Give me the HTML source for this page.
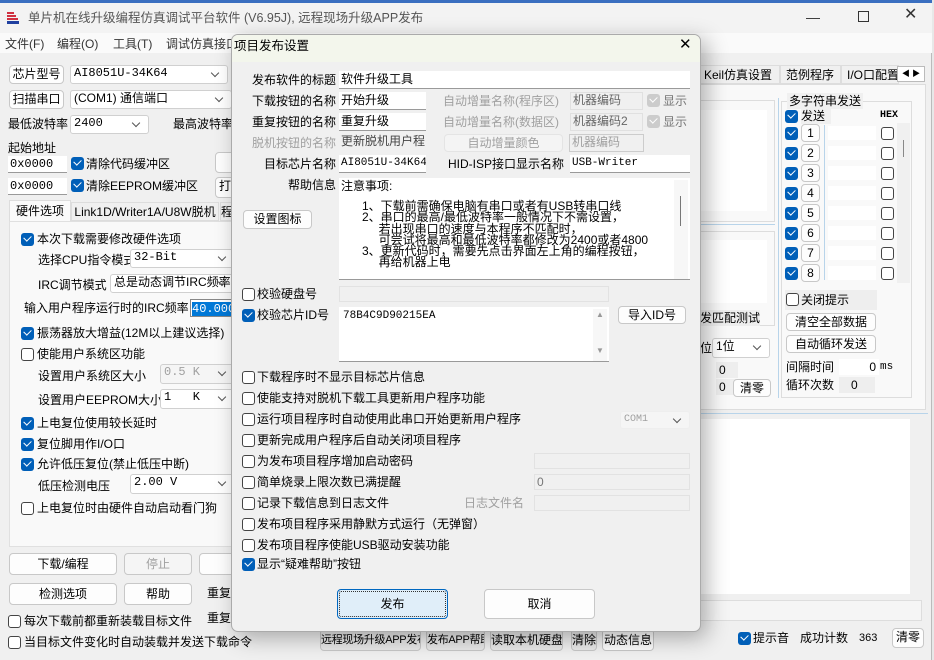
<!DOCTYPE html>
<html><head><meta charset="utf-8">
<style>
*{box-sizing:border-box;margin:0;padding:0}
body{width:934px;height:660px;overflow:hidden;background:#e8e8e8;font-family:"Liberation Sans","Noto Sans CJK SC",sans-serif;font-size:12px;color:#000;position:relative}
.a{position:absolute;white-space:nowrap;line-height:16px}
.g{color:#a0a0a0}
.cb{position:absolute;width:13px;height:13px;border:1px solid #444;border-radius:3px;background:#fff}
.ck{position:absolute;width:13px;height:13px;border-radius:3px;background:#005fb8}
.ck:after{content:"";position:absolute;left:3px;top:2px;width:6px;height:4px;border-left:1.5px solid #fff;border-bottom:1.5px solid #fff;transform:rotate(-45deg)}
.ckd{position:absolute;width:13px;height:13px;border-radius:3px;background:#ccc}
.ckd:after{content:"";position:absolute;left:3px;top:2px;width:6px;height:4px;border-left:1.5px solid #fff;border-bottom:1.5px solid #fff;transform:rotate(-45deg)}
.btn{position:absolute;background:#fdfdfd;border:1px solid #c8c8c8;border-radius:4px;text-align:center;line-height:16px;white-space:nowrap;overflow:hidden}
.in{position:absolute;background:#fff;border-bottom:1px solid #9a9a9a;line-height:16px;padding-left:2px;white-space:nowrap;overflow:hidden}
.in2{position:absolute;background:#f0f0f0;border:1px solid #e0e0e0;line-height:15px;padding-left:2px;white-space:nowrap;overflow:hidden}
.sel{position:absolute;background:#fff;border:1px solid #d0d0d0;border-radius:3px;line-height:15px;padding-left:3px;white-space:nowrap;overflow:hidden}
.sel:after{content:"";position:absolute;right:9px;top:4px;width:5px;height:5px;border-right:1px solid #555;border-bottom:1px solid #555;transform:rotate(45deg)}
.m{font-family:"Liberation Mono","Noto Sans CJK SC",monospace}
.bb{font-size:11px;letter-spacing:-0.3px}
</style></head><body>
<div class="a" style="left:0;top:0;width:932px;height:660px;background:#f0f0f0;border-right:1px solid #bbb"></div>
<div class="a" style="left:0;top:0;width:932px;height:3px;background:#3a6fc0"></div>
<div class="a" style="left:0;top:3px;width:932px;height:30px;background:#f3f3f3"></div>
<svg class="a" style="left:6px;top:11px" width="14" height="13"><path d="M1 2h7M1 5h9M1 8h11" stroke="#d03040" stroke-width="2"/><rect x="1" y="10" width="12" height="3" fill="#2040a0"/></svg>
<div class="a" style="left:28px;top:10px;color:#555;font-size:12.5px">单片机在线升级编程仿真调试平台软件 (V6.95J), 远程现场升级APP发布</div>
<div class="a" style="left:806px;top:9px;color:#333;font-size:14px">—</div>
<div class="a" style="left:858px;top:11px;width:11px;height:11px;border:1px solid #333"></div>
<div class="a" style="left:904px;top:7px;color:#333;font-size:16px">✕</div>
<div class="a" style="left:0;top:33px;width:932px;height:20px;background:#fafafa"></div>
<div class="a" style="left:5px;top:36px;color:#333">文件(F)</div>
<div class="a" style="left:57px;top:36px;color:#333">编程(O)</div>
<div class="a" style="left:113px;top:36px;color:#333">工具(T)</div>
<div class="a" style="left:166px;top:36px;color:#333">调试仿真接口</div>

<div class="btn" style="left:9px;top:65px;width:55px;height:19px">芯片型号</div>
<div class="sel m" style="left:70px;top:65px;width:158px;height:19px">AI8051U-34K64</div>
<div class="btn" style="left:9px;top:90px;width:55px;height:19px">扫描串口</div>
<div class="sel" style="left:70px;top:90px;width:162px;height:19px">(COM1) 通信端口</div>
<div class="a" style="left:8px;top:116px">最低波特率</div>
<div class="sel m" style="left:70px;top:115px;width:79px;height:19px">2400</div>
<div class="a" style="left:173px;top:116px">最高波特率</div>
<div class="a" style="left:8px;top:140px">起始地址</div>
<div class="in m" style="left:8px;top:156px;width:59px;height:17px">0x0000</div>
<div class="ck" style="left:71px;top:157px"></div><div class="a" style="left:86px;top:156px">清除代码缓冲区</div>
<div class="btn" style="left:215px;top:152px;width:20px;height:21px"></div>
<div class="in m" style="left:8px;top:178px;width:59px;height:17px">0x0000</div>
<div class="ck" style="left:71px;top:179px"></div><div class="a" style="left:86px;top:178px">清除EEPROM缓冲区</div>
<div class="btn" style="left:215px;top:177px;width:20px;height:21px">打</div>
<div class="a" style="left:9px;top:200px;width:62px;height:21px;background:#fafafa;border:1px solid #ddd;border-bottom:none;text-align:center;line-height:20px">硬件选项</div>
<div class="a" style="left:71px;top:202px;width:148px;height:19px;border:1px solid #ddd;text-align:center;line-height:18px">Link1D/Writer1A/U8W脱机</div>
<div class="a" style="left:220px;top:202px;width:14px;height:19px;border:1px solid #ddd;line-height:18px">程</div>
<div class="a" style="left:9px;top:221px;width:226px;height:326px;background:#f9f9f9;border:1px solid #e0e0e0"></div>
<div class="ck" style="left:21px;top:233px"></div><div class="a" style="left:37px;top:231px">本次下载需要修改硬件选项</div>
<div class="a" style="left:38px;top:252px">选择CPU指令模式</div><div class="sel m" style="left:130px;top:249px;width:105px;height:19px">32-Bit</div>
<div class="a" style="left:38px;top:277px">IRC调节模式</div><div class="sel" style="left:110px;top:274px;width:125px;height:19px">总是动态调节IRC频率</div>
<div class="a" style="left:24px;top:300px">输入用户程序运行时的IRC频率</div>
<div class="a m" style="left:190px;top:299px;width:45px;height:18px;background:#fff;border:1px solid #888;padding:1px"><span style="background:#0078d7;color:#fff">40.000</span></div>
<div class="ck" style="left:21px;top:327px"></div><div class="a" style="left:37px;top:325px">振荡器放大增益(12M以上建议选择)</div>
<div class="cb" style="left:21px;top:348px"></div><div class="a" style="left:37px;top:346px">使能用户系统区功能</div>
<div class="a" style="left:38px;top:368px">设置用户系统区大小</div><div class="sel m g" style="left:160px;top:364px;width:75px;height:20px;background:#f5f5f5">0.5 K</div>
<div class="a" style="left:38px;top:392px">设置用户EEPROM大小</div><div class="sel m" style="left:160px;top:389px;width:75px;height:20px">1&nbsp;&nbsp;&nbsp;K</div>
<div class="ck" style="left:21px;top:417px"></div><div class="a" style="left:37px;top:415px">上电复位使用较长延时</div>
<div class="ck" style="left:21px;top:438px"></div><div class="a" style="left:37px;top:436px">复位脚用作I/O口</div>
<div class="ck" style="left:21px;top:458px"></div><div class="a" style="left:37px;top:456px">允许低压复位(禁止低压中断)</div>
<div class="a" style="left:38px;top:478px">低压检测电压</div><div class="sel m" style="left:130px;top:474px;width:105px;height:20px">2.00 V</div>
<div class="cb" style="left:21px;top:502px"></div><div class="a" style="left:37px;top:500px">上电复位时由硬件自动启动看门狗</div>
<div class="btn" style="left:9px;top:553px;width:108px;height:22px;line-height:20px">下载/编程</div>
<div class="btn g" style="left:124px;top:553px;width:68px;height:22px;line-height:20px;background:#f5f5f5">停止</div>
<div class="btn" style="left:199px;top:553px;width:36px;height:22px"></div>
<div class="btn" style="left:9px;top:583px;width:108px;height:22px;line-height:20px">检测选项</div>
<div class="btn" style="left:124px;top:583px;width:68px;height:22px;line-height:20px">帮助</div>
<div class="a" style="left:207px;top:585px">重复</div>
<div class="a" style="left:207px;top:610px">重复</div>
<div class="cb" style="left:8px;top:615px"></div><div class="a" style="left:24px;top:613px">每次下载前都重新装载目标文件</div>
<div class="cb" style="left:8px;top:636px"></div><div class="a" style="left:24px;top:634px">当目标文件变化时自动装载并发送下载命令</div>

<div class="a" style="left:700px;top:65px;width:80px;height:19px;border:1px solid #ddd;line-height:18px;padding-left:3px">Keil仿真设置</div>
<div class="a" style="left:780px;top:65px;width:61px;height:19px;border:1px solid #ddd;line-height:18px;padding-left:5px">范例程序</div>
<div class="a" style="left:841px;top:65px;width:58px;height:19px;border:1px solid #ddd;line-height:18px;padding-left:5px;overflow:hidden">I/O口配置</div>
<div class="a" style="left:897px;top:66px;width:28px;height:16px;background:#fff;border:1px solid #bbb;font-size:8px;line-height:14px;text-align:center">◀ ▶</div>
<div class="a" style="left:700px;top:84px;width:226px;height:326px;background:#f9f9f9;border:1px solid #ddd"></div>
<div class="a" style="left:700px;top:100px;width:75px;height:122px;border:1px solid #ddd"></div>
<div class="a" style="left:700px;top:110px;width:67px;height:101px;background:#fff"></div>
<div class="a" style="left:700px;top:224px;width:75px;height:1px;background:#b8d4ea"></div>
<div class="a" style="left:700px;top:231px;width:75px;height:95px;border:1px solid #ddd"></div>
<div class="a" style="left:700px;top:240px;width:67px;height:63px;background:#fff"></div>
<div class="a" style="left:700px;top:310px;background:#eee">发匹配测试</div>
<div class="a" style="left:700px;top:340px">位</div>
<div class="sel" style="left:712px;top:338px;width:58px;height:20px">1位</div>
<div class="a" style="left:716px;top:362px;width:22px;background:#eee;padding-left:3px">0</div>
<div class="a" style="left:716px;top:379px;width:22px;background:#eee;padding-left:3px">0</div>
<div class="btn" style="left:733px;top:379px;width:38px;height:18px">清零</div>
<div class="a" style="left:778px;top:98px;width:1px;height:300px;background:#b8d4ea"></div>
<div class="a" style="left:781px;top:101px;width:131px;height:297px;border:1px solid #ddd"></div>
<div class="a" style="left:787px;top:93px;background:#f0f0f0;padding:0 2px">多字符串发送</div>
<div class="ck" style="left:785px;top:110px"></div><div class="a" style="left:801px;top:108px;background:#f0f0f0;width:30px">发送</div>
<div class="a m" style="left:880px;top:108px;font-size:10px;font-weight:bold">HEX</div>
<div class="a" style="left:897px;top:123px;width:13px;height:160px;background:#f0f0f0"></div>
<div class="a" style="left:903px;top:140px;width:1px;height:17px;background:#888"></div>
<div class="a" style="left:824px;top:125px;width:1px;height:155px;background:#b8d4ea"></div>

<div class="ck" style="left:785px;top:127px"></div><div class="btn" style="left:801px;top:124px;width:19px;height:18px">1</div><div class="a" style="left:828px;top:126px;width:48px;height:14px;background:#fff"></div><div class="cb" style="left:881px;top:127px"></div>
<div class="ck" style="left:785px;top:147px"></div><div class="btn" style="left:801px;top:144px;width:19px;height:18px">2</div><div class="a" style="left:828px;top:146px;width:48px;height:14px;background:#fff"></div><div class="cb" style="left:881px;top:147px"></div>
<div class="ck" style="left:785px;top:167px"></div><div class="btn" style="left:801px;top:164px;width:19px;height:18px">3</div><div class="a" style="left:828px;top:166px;width:48px;height:14px;background:#fff"></div><div class="cb" style="left:881px;top:167px"></div>
<div class="ck" style="left:785px;top:187px"></div><div class="btn" style="left:801px;top:184px;width:19px;height:18px">4</div><div class="a" style="left:828px;top:186px;width:48px;height:14px;background:#fff"></div><div class="cb" style="left:881px;top:187px"></div>
<div class="ck" style="left:785px;top:207px"></div><div class="btn" style="left:801px;top:204px;width:19px;height:18px">5</div><div class="a" style="left:828px;top:206px;width:48px;height:14px;background:#fff"></div><div class="cb" style="left:881px;top:207px"></div>
<div class="ck" style="left:785px;top:227px"></div><div class="btn" style="left:801px;top:224px;width:19px;height:18px">6</div><div class="a" style="left:828px;top:226px;width:48px;height:14px;background:#fff"></div><div class="cb" style="left:881px;top:227px"></div>
<div class="ck" style="left:785px;top:247px"></div><div class="btn" style="left:801px;top:244px;width:19px;height:18px">7</div><div class="a" style="left:828px;top:246px;width:48px;height:14px;background:#fff"></div><div class="cb" style="left:881px;top:247px"></div>
<div class="ck" style="left:785px;top:267px"></div><div class="btn" style="left:801px;top:264px;width:19px;height:18px">8</div><div class="a" style="left:828px;top:266px;width:48px;height:14px;background:#fff"></div><div class="cb" style="left:881px;top:267px"></div>
<div class="a" style="left:785px;top:290px;width:92px;height:20px;background:#eee"></div>
<div class="cb" style="left:786px;top:293px"></div><div class="a" style="left:801px;top:292px">关闭提示</div>
<div class="btn" style="left:786px;top:313px;width:90px;height:18px">清空全部数据</div>
<div class="btn" style="left:786px;top:335px;width:90px;height:18px">自动循环发送</div>
<div class="a" style="left:786px;top:359px">间隔时间</div><div class="a" style="left:839px;top:359px;width:40px;background:#fff;text-align:right;padding-right:3px">0</div><div class="a m" style="left:880px;top:359px;font-size:11px">ms</div>
<div class="a" style="left:786px;top:377px">循环次数</div><div class="a" style="left:839px;top:377px;width:36px;background:#eee;padding-left:12px">0</div>
<div class="a" style="left:700px;top:413px;width:228px;height:1px;background:#b8d4ea"></div>
<div class="a" style="left:700px;top:419px;width:210px;height:175px;background:#fff"></div>
<div class="a" style="left:700px;top:600px;width:222px;height:21px;background:#f5f5f5;border:1px solid #ddd"></div>

<div class="btn bb" style="left:320px;top:629px;width:101px;height:22px;line-height:20px;background:#e8e8e8">远程现场升级APP发布</div>
<div class="btn bb" style="left:426px;top:629px;width:59px;height:22px;line-height:20px;background:#e8e8e8">发布APP帮助</div>
<div class="btn" style="left:490px;top:629px;width:73px;height:22px;line-height:20px;background:#e8e8e8">读取本机硬盘号</div>
<div class="btn" style="left:571px;top:629px;width:26px;height:22px;line-height:20px;background:#e8e8e8">清除</div>
<div class="btn" style="left:602px;top:629px;width:52px;height:22px;line-height:20px">动态信息</div>
<div class="ck" style="left:738px;top:632px"></div><div class="a" style="left:753px;top:630px">提示音</div>
<div class="a" style="left:800px;top:630px">成功计数</div>
<div class="a" style="left:859px;top:630px;font-size:11px">363</div>
<div class="btn" style="left:892px;top:628px;width:32px;height:20px">清零</div>

<div class="a" style="left:231px;top:34px;width:470px;height:598px;background:#f0f0f0;border:1px solid #aaa;border-radius:7px;box-shadow:6px 6px 22px rgba(0,0,0,0.3);overflow:hidden">
<div style="height:27px;background:#f3f6ec"></div>
</div>
<div class="a" style="left:234px;top:38px;font-size:12.5px">项目发布设置</div>
<div class="a" style="left:679px;top:37px;font-size:15px">✕</div>

<div class="a" style="left:240px;top:72px;width:96px;text-align:right">发布软件的标题</div>
<div class="in" style="left:339px;top:71px;width:351px;height:18px">软件升级工具</div>
<div class="a" style="left:240px;top:93px;width:96px;text-align:right">下载按钮的名称</div>
<div class="in" style="left:339px;top:92px;width:87px;height:18px">开始升级</div>
<div class="a g" style="left:443px;top:93px">自动增量名称(程序区)</div>
<div class="in2 g" style="left:570px;top:92px;width:73px;height:18px;color:#666">机器编码</div>
<div class="ckd" style="left:647px;top:94px"></div><div class="a g" style="left:663px;top:93px;color:#777">显示</div>
<div class="a" style="left:240px;top:114px;width:96px;text-align:right">重复按钮的名称</div>
<div class="in" style="left:339px;top:113px;width:87px;height:18px">重复升级</div>
<div class="a g" style="left:443px;top:114px">自动增量名称(数据区)</div>
<div class="in2 g" style="left:570px;top:113px;width:73px;height:18px;color:#666">机器编码2</div>
<div class="ckd" style="left:647px;top:115px"></div><div class="a g" style="left:663px;top:114px;color:#777">显示</div>
<div class="a g" style="left:240px;top:135px;width:96px;text-align:right">脱机按钮的名称</div>
<div class="in2" style="left:339px;top:134px;width:87px;height:18px;border:none;color:#444">更新脱机用户程</div>
<div class="btn g" style="left:444px;top:134px;width:119px;height:18px;background:#f4f4f4;border-color:#e4e4e4">自动增量颜色</div>
<div class="in2 g" style="left:569px;top:134px;width:75px;height:18px;border:1px solid #ccc">机器编码</div>
<div class="a" style="left:240px;top:156px;width:96px;text-align:right">目标芯片名称</div>
<div class="in m" style="left:339px;top:155px;width:87px;height:18px;font-size:11px">AI8051U-34K64</div>
<div class="a" style="left:440px;top:156px;width:124px;text-align:right">HID-ISP接口显示名称</div>
<div class="in m" style="left:570px;top:155px;width:120px;height:18px;font-size:11px">USB-Writer</div>
<div class="a" style="left:240px;top:177px;width:96px;text-align:right">帮助信息</div>
<div class="a" style="left:339px;top:178px;width:351px;height:102px;background:#fff;border-bottom:1px solid #999"></div>
<div class="a" style="left:674px;top:180px;width:14px;height:99px;background:#f7f7f7"></div>
<div class="a" style="left:680px;top:196px;width:1px;height:30px;background:#777"></div>
<div class="a" style="left:341px;top:178px">注意事项:</div>
<div class="a" style="left:362px;top:201px;line-height:11.3px">1、下载前需确保电脑有串口或者有USB转串口线<br>2、串口的最高/最低波特率一般情况下不需设置，<br>&nbsp;&nbsp;&nbsp;&nbsp;&nbsp;若出现串口的速度与本程序不匹配时，<br>&nbsp;&nbsp;&nbsp;&nbsp;&nbsp;可尝试将最高和最低波特率都修改为2400或者4800<br>3、更新代码时，需要先点击界面左上角的编程按钮，<br>&nbsp;&nbsp;&nbsp;&nbsp;&nbsp;再给机器上电</div>
<div class="btn" style="left:243px;top:210px;width:69px;height:19px">设置图标</div>
<div class="cb" style="left:242px;top:288px"></div><div class="a" style="left:257px;top:286px">校验硬盘号</div>
<div class="a" style="left:339px;top:286px;width:270px;height:16px;background:#f0f0f0;border:1px solid #e2e2e2"></div>
<div class="ck" style="left:242px;top:309px"></div><div class="a" style="left:257px;top:307px">校验芯片ID号</div>
<div class="a m" style="left:339px;top:307px;width:270px;height:55px;background:#fff;border-bottom:1px solid #999;padding:2px 4px;font-size:11px;line-height:14px">78B4C9D90215EA</div>
<div class="a" style="left:593px;top:309px;width:14px;height:52px;background:#f7f7f7;color:#999;font-size:8px;text-align:center;line-height:12px">▲<br><br><br>▼</div>
<div class="btn" style="left:618px;top:306px;width:68px;height:18px">导入ID号</div>

<div class="cb" style="left:242px;top:371px"></div><div class="a" style="left:257px;top:369px">下载程序时不显示目标芯片信息</div>
<div class="cb" style="left:242px;top:392px"></div><div class="a" style="left:257px;top:390px">使能支持对脱机下载工具更新用户程序功能</div>
<div class="cb" style="left:242px;top:413px"></div><div class="a" style="left:257px;top:411px">运行项目程序时自动使用此串口开始更新用户程序</div>
<div class="sel m g" style="left:620px;top:411px;width:70px;height:18px;background:#f5f5f5;border-color:#eee;font-size:10px">COM1</div>
<div class="cb" style="left:242px;top:434px"></div><div class="a" style="left:257px;top:432px">更新完成用户程序后自动关闭项目程序</div>
<div class="cb" style="left:242px;top:455px"></div><div class="a" style="left:257px;top:453px">为发布项目程序增加启动密码</div>
<div class="a" style="left:534px;top:453px;width:156px;height:16px;background:#f0f0f0;border:1px solid #e2e2e2"></div>
<div class="cb" style="left:242px;top:476px"></div><div class="a" style="left:257px;top:474px">简单烧录上限次数已满提醒</div>
<div class="a g" style="left:534px;top:474px;width:156px;height:16px;background:#f0f0f0;border:1px solid #e2e2e2;line-height:14px;padding-left:2px;color:#777">0</div>
<div class="cb" style="left:242px;top:497px"></div><div class="a" style="left:257px;top:495px">记录下载信息到日志文件</div>
<div class="a g" style="left:464px;top:495px">日志文件名</div>
<div class="a" style="left:534px;top:495px;width:156px;height:16px;background:#f0f0f0;border:1px solid #e2e2e2"></div>
<div class="cb" style="left:242px;top:518px"></div><div class="a" style="left:257px;top:516px">发布项目程序采用静默方式运行（无弹窗）</div>
<div class="cb" style="left:242px;top:539px"></div><div class="a" style="left:257px;top:537px">发布项目程序使能USB驱动安装功能</div>
<div class="ck" style="left:242px;top:558px"></div><div class="a" style="left:257px;top:556px">显示“疑难帮助”按钮</div>
<div class="btn" style="left:337px;top:589px;width:111px;height:30px;line-height:28px;background:#e0eef9;border:1px solid #0067c0;outline:1px dotted #333;outline-offset:-3px">发布</div>
<div class="btn" style="left:484px;top:589px;width:111px;height:30px;line-height:28px">取消</div>
</body></html>
